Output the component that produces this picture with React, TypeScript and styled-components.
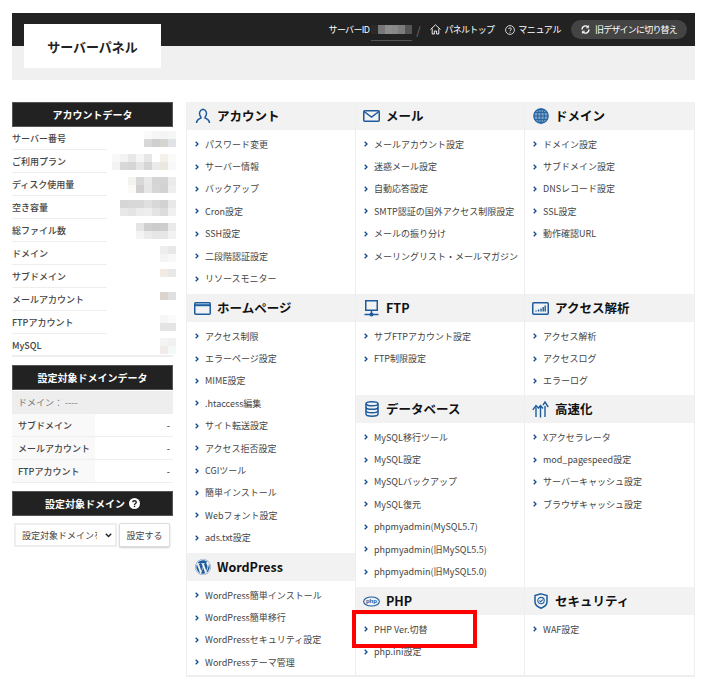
import styled, { createGlobalStyle } from "styled-components";
import { FaWordpress } from "react-icons/fa";

const GlobalStyle = createGlobalStyle`
    body {
        margin: 0;
        background: #fff;
        font-family: "Noto Sans CJK JP", "Noto Sans", sans-serif;
        color: #444;
    }
`;

const BLUE = "#1c5c9e";

const Page = styled.div`
    width: 683px;
    padding: 13px 15px 10px 12px;
`;

/* header */
const TopBar = styled.header`
    display: flex;
    align-items: flex-start;
    height: 33px;
    background: #222;
    color: #fff;
    font-size: 9px;
`;
const Logo = styled.div`
    position: relative;
    z-index: 1;
    flex: none;
    display: flex;
    align-items: center;
    justify-content: center;
    width: 137px;
    height: 44px;
    margin: 11px 0 0 12px;
    background: #fff;
    color: #222;
    font-size: 13px;
    font-weight: 700;
`;
const Nav = styled.nav`
    flex: 1;
    display: flex;
    align-items: center;
    justify-content: flex-end;
    height: 33px;
    padding-right: 8px;
`;
const NavText = styled.span<{ $gap?: number; $tight?: boolean }>`
    display: flex;
    align-items: center;
    gap: 3px;
    margin-right: ${(p) => p.$gap ?? 0}px;
    letter-spacing: ${(p) => (p.$tight ? "-0.7px" : "-0.4px")};
`;
const Slash = styled.span`
    margin: 0 10px 0 4px;
    color: #777;
    font-size: 11px;
`;
const IdBox = styled.span`
    display: flex;
    width: 41px;
    height: 9px;
    margin: 6px 0 0 2px;
    padding-bottom: 6px;
    border-bottom: 1px solid #555;
`;
const IdCell = styled.i<{ $c: string }>`
    flex: 1;
    height: 9px;
    background: ${(p) => p.$c};
`;
const SwitchPill = styled.span`
    display: flex;
    align-items: center;
    gap: 5px;
    height: 19px;
    padding: 0 10px;
    margin-left: 10px;
    border-radius: 10px;
    background: #444;
    letter-spacing: -0.8px;
`;
const Band = styled.div`
    height: 34px;
    background: #f0f0f0;
`;

/* layout */
const Body = styled.div`
    display: grid;
    grid-template-columns: 161px 509px;
    justify-content: space-between;
    margin-top: 22px;
`;

/* sidebar */
const Sidebar = styled.aside`
    display: flex;
    flex-direction: column;
`;
const SideTitle = styled.h2`
    display: flex;
    align-items: center;
    justify-content: center;
    gap: 4px;
    height: 25px;
    margin: 0;
    box-sizing: border-box;
    border: 1px solid #555;
    background: #222;
    color: #fff;
    font-size: 10px;
    font-weight: 700;
`;
const DataRow = styled.div`
    display: flex;
    align-items: center;
    justify-content: space-between;
    height: 23px;
    background: linear-gradient(#eee, #eee) no-repeat left bottom / 95px 1px;
    font-size: 9px;
    font-weight: 500;
    color: #444;
    &:last-child {
        background-size: 100% 2px;
    }
`;
const AccountData = styled.div`
    margin-bottom: 8px;
`;
const Mosaic = styled.div<{ $n: number }>`
    display: grid;
    grid-template-columns: repeat(${(p) => p.$n}, 8px);
    grid-auto-rows: 8px;
    margin-right: -3px;
`;
const Cell = styled.i<{ $c: string }>`
    background: ${(p) => p.$c};
`;
const DomainHead = styled.div`
    display: flex;
    align-items: center;
    height: 23px;
    margin-top: 1px;
    padding-left: 6px;
    background: #eee;
    color: #777;
    font-size: 9px;
`;
const TableRow = styled.div`
    display: flex;
    align-items: stretch;
    height: 23px;
    box-sizing: border-box;
    border-bottom: 1px solid #eee;
    font-size: 9px;
    font-weight: 500;
`;
const TableLabel = styled.div`
    display: flex;
    align-items: center;
    width: 77px;
    padding-left: 6px;
    background: #f9f9f9;
`;
const TableValue = styled.div`
    flex: 1;
    display: flex;
    align-items: center;
    justify-content: flex-end;
    padding-right: 3px;
`;
const DomainData = styled.div`
    margin-bottom: 8px;
`;
const FormRow = styled.form`
    display: flex;
    gap: 2px;
    margin: 7px 0 0 2px;
`;
const SelectWrap = styled.div`
    position: relative;
    width: 103px;
    height: 24px;
    svg {
        position: absolute;
        right: 5px;
        top: 10px;
        pointer-events: none;
    }
`;
const DomainSelect = styled.select`
    display: block;
    appearance: none;
    width: 100%;
    height: 100%;
    box-sizing: border-box;
    border: 2px solid #eee;
    border-radius: 0;
    background: #fff;
    color: #444;
    font-family: inherit;
    font-size: 9px;
    padding: 0 18px 0 6px;
`;
const SetButton = styled.button`
    width: 51px;
    height: 24px;
    padding: 0;
    box-sizing: border-box;
    border: 1px solid #ddd;
    border-radius: 2px;
    background: #fff;
    box-shadow: 0 1px 2px rgba(0, 0, 0, 0.2);
    color: #444;
    font-family: inherit;
    font-size: 9px;
`;

/* menu */
const Menu = styled.main`
    display: grid;
    grid-template-columns: repeat(3, 169px);
    height: 575px;
    box-sizing: border-box;
    border: 1px solid #eee;
    border-top: 0;
    border-bottom-width: 2px;
`;
const Column = styled.div`
    display: flex;
    flex-direction: column;
    &:not(:last-child) {
        border-right: 1px solid #eee;
    }
`;
const Section = styled.section<{ $h?: number }>`
    flex: ${(p) => (p.$h ? `0 0 ${p.$h}px` : "1")};
`;
const SectionHead = styled.h3`
    display: flex;
    align-items: center;
    gap: 6px;
    height: 28px;
    box-sizing: border-box;
    margin: 0;
    padding: 0 0 2px 7px;
    background: #f2f2f2;
    color: #111;
    font-size: 12.5px;
    font-weight: 700;
`;
const IconSlot = styled.span`
    display: flex;
    align-items: center;
    justify-content: center;
    width: 17px;
    height: 18px;
    margin-top: 2px;
    color: ${BLUE};
`;
const List = styled.ul`
    list-style: none;
    margin: 0;
    padding: 3px 0 0 8px;
`;
const Item = styled.li<{ $marked?: boolean }>`
    position: relative;
    display: flex;
    align-items: center;
    gap: 6px;
    height: 22.4px;
    font-size: 9px;
    color: #444;
    ${(p) =>
        p.$marked &&
        `&::after {
            content: "";
            position: absolute;
            left: -12px;
            top: -8px;
            width: 117px;
            height: 30px;
            border: 4px solid #f00;
        }`}
`;

function Chevron() {
    return (
        <svg width="4" height="6" viewBox="0 0 4 6">
            <path d="M0.7 0.7 L3 3 L0.7 5.3" fill="none" stroke="#0f4a8c" strokeWidth="1.3" />
        </svg>
    );
}

const stroke = { fill: "none", stroke: "currentColor", strokeWidth: 1.5 };

const icons: Record<string, React.ReactNode> = {
    user: (
        <svg width="16" height="16" viewBox="0 0 16 16" {...stroke}>
            <path d="M1.5 15 C1.5 11.5 4 11 6 10 C6.2 9 5.6 8.6 5 7.6 C4.2 6.2 4 2 8 1.2 C12 2 11.8 6.2 11 7.6 C10.4 8.6 9.8 9 10 10 C12 11 14.5 11.5 14.5 15" />
        </svg>
    ),
    mail: (
        <svg width="17" height="12" viewBox="0 0 17 12" {...stroke}>
            <rect x="0.75" y="0.75" width="15.5" height="10.5" rx="1" />
            <path d="M1 1.5 L8.5 7 L16 1.5" />
        </svg>
    ),
    globe: (
        <svg width="16" height="16" viewBox="0 0 16 16" fill="none" stroke="currentColor" strokeWidth="0.9">
            <circle cx="8" cy="8" r="7.2" fill="currentColor" fillOpacity="0.55" strokeWidth="1.2" />
            <ellipse cx="8" cy="8" rx="3.4" ry="7.2" />
            <path d="M8 1 V15 M1 8 H15 M2 4.4 H14 M2 11.6 H14" />
        </svg>
    ),
    window: (
        <svg width="17" height="13" viewBox="0 0 17 13" {...stroke}>
            <rect x="0.75" y="0.75" width="15.5" height="11.5" rx="1" />
            <path d="M1 3.2 H16" strokeWidth="2" />
        </svg>
    ),
    monitor: (
        <svg width="15" height="17" viewBox="0 0 15 17" {...stroke}>
            <rect x="1.75" y="0.75" width="11.5" height="9.5" />
            <path d="M7.5 10.5 V15 M0.5 14.5 H14.5" />
            <circle cx="7.5" cy="14.5" r="1.3" fill="currentColor" />
        </svg>
    ),
    chart: (
        <svg width="17" height="13" viewBox="0 0 17 13" {...stroke}>
            <rect x="0.75" y="0.75" width="15.5" height="11.5" rx="1" />
            <path d="M4 9.5 V8.5 M6.5 9.5 V7.5 M9 9.5 V6.5 M11.2 9.5 V5 M13.2 9.5 V3.5" strokeWidth="1.4" />
        </svg>
    ),
    database: (
        <svg width="14" height="16" viewBox="0 0 14 16" {...stroke}>
            <ellipse cx="7" cy="2.8" rx="6" ry="2" />
            <path d="M1 2.8 V13 C1 14.3 3.5 15.2 7 15.2 C10.5 15.2 13 14.3 13 13 V2.8" />
            <path d="M1 6.2 C1 7.5 3.5 8.3 7 8.3 C10.5 8.3 13 7.5 13 6.2 M1 9.8 C1 11 3.5 11.8 7 11.8 C10.5 11.8 13 11 13 9.8" />
        </svg>
    ),
    speed: (
        <svg width="17" height="17" viewBox="0 0 17 17" fill="none" stroke="currentColor" strokeWidth="1.4">
            <path d="M8.5 16.5 V5 M6 7.5 L8.5 4.5 L11 7.5" />
            <path d="M4 16 V6.5 M0.8 8.8 L4 4.5 L6 6.8" />
            <path d="M13 16 V5 M11 4.2 L13 1 L16.2 6" />
        </svg>
    ),
    wordpress: <FaWordpress size={16} />,
    php: (
        <svg width="18" height="11" viewBox="0 0 18 11">
            <ellipse cx="9" cy="5.5" rx="8.3" ry="4.8" fill="none" stroke="currentColor" strokeWidth="1.2" />
            <text x="9" y="7.6" textAnchor="middle" fontSize="6.5" fontWeight="700" fill="currentColor" fontFamily="Liberation Sans, sans-serif">
                php
            </text>
        </svg>
    ),
    shield: (
        <svg width="14" height="16" viewBox="0 0 14 16" {...stroke}>
            <path d="M7 0.9 L13 2.6 V9 C13 12 10 14 7 15.2 C4 14 1 12 1 9 V2.6 Z" />
            <circle cx="7" cy="7.6" r="3.2" strokeWidth="1.1" />
            <path d="M5.4 7.6 L6.7 8.8 L8.7 6.6" strokeWidth="1.1" />
        </svg>
    ),
};

type SectionData = { title: string; icon: string; h?: number; items: string[] };

const columns: SectionData[][] = [
    [
        { title: "アカウント", icon: "user", h: 192, items: ["パスワード変更", "サーバー情報", "バックアップ", "Cron設定", "SSH設定", "二段階認証設定", "リソースモニター"] },
        { title: "ホームページ", icon: "window", h: 259, items: ["アクセス制限", "エラーページ設定", "MIME設定", ".htaccess編集", "サイト転送設定", "アクセス拒否設定", "CGIツール", "簡単インストール", "Webフォント設定", "ads.txt設定"] },
        { title: "WordPress", icon: "wordpress", items: ["WordPress簡単インストール", "WordPress簡単移行", "WordPressセキュリティ設定", "WordPressテーマ管理"] },
    ],
    [
        { title: "メール", icon: "mail", h: 192, items: ["メールアカウント設定", "迷惑メール設定", "自動応答設定", "SMTP認証の国外アクセス制限設定", "メールの振り分け", "メーリングリスト・メールマガジン"] },
        { title: "FTP", icon: "monitor", h: 101, items: ["サブFTPアカウント設定", "FTP制限設定"] },
        { title: "データベース", icon: "database", h: 192, items: ["MySQL移行ツール", "MySQL設定", "MySQLバックアップ", "MySQL復元", "phpmyadmin(MySQL5.7)", "phpmyadmin(旧MySQL5.5)", "phpmyadmin(旧MySQL5.0)"] },
        { title: "PHP", icon: "php", items: ["PHP Ver.切替", "php.ini設定"] },
    ],
    [
        { title: "ドメイン", icon: "globe", h: 192, items: ["ドメイン設定", "サブドメイン設定", "DNSレコード設定", "SSL設定", "動作確認URL"] },
        { title: "アクセス解析", icon: "chart", h: 101, items: ["アクセス解析", "アクセスログ", "エラーログ"] },
        { title: "高速化", icon: "speed", h: 192, items: ["Xアクセラレータ", "mod_pagespeed設定", "サーバーキャッシュ設定", "ブラウザキャッシュ設定"] },
        { title: "セキュリティ", icon: "shield", items: ["WAF設定"] },
    ],
];

const accountRows: { label: string; cells: string[][] }[] = [
    { label: "サーバー番号", cells: [["#fafafa", "#f6f6f6", "#f4f4f4", "#f6f6f6"], ["#d8d8d8", "#cfcfcf", "#d4d4d0", "#e0e4e8"]] },
    { label: "ご利用プラン", cells: [["#f8f8f8", "#f3f3f3", "#e8e8e8", "#f5f5f5", "#e6e6e6", "#fff", "#f4f1ea", "#fafafa"], ["#f3f3f3", "#d8d8d8", "#d6d6d6", "#e5e5e5", "#d5d5d5", "#ebebeb", "#ece8e0", "#f8f8f8"]] },
    { label: "ディスク使用量", cells: [["#f5f3f0", "#d8d8d8", "#e8e8e8", "#d4d4d4", "#d4d4d4", "#ebebeb"], ["#fbfaf8", "#cfcfcf", "#e6e6e6", "#d6d6d6", "#d2d2d2", "#eeeeee"]] },
    { label: "空き容量", cells: [["#d6d6d6", "#d8d8d8", "#d8d8d8", "#e0e0e0", "#d8d8d8", "#d2d2d2", "#e8e8e8"], ["#e8e8e8", "#e4e4e4", "#ececec", "#eeeeee", "#e4e4e4", "#dcdcdc", "#f0f0f0"]] },
    { label: "総ファイル数", cells: [["#e4e4e4", "#cfcfcf", "#cbcbcb", "#cdcdcd", "#eaeaea"], ["#f4f4f4", "#ebebeb", "#e6e6e6", "#e6e6e6", "#f2f2f2"]] },
    { label: "ドメイン", cells: [["#eeeeee", "#e8e8e8"], ["#f4f4f4", "#f8f8f8"]] },
    { label: "サブドメイン", cells: [["#f1ebe4", "#e8e8e8"], ["#fff", "#fff"]] },
    { label: "メールアカウント", cells: [["#dad4cc", "#e0e0e0"], ["#fff", "#fff"]] },
    { label: "FTPアカウント", cells: [["#f6f6f6", "#fafafa"], ["#e4e4e4", "#e4e4e4"]] },
    { label: "MySQL", cells: [["#f4f4f4", "#f1f1f1"], ["#f0ebe6", "#f4f8f6"]] },
];

const idCells = ["#2a2a2a", "#777", "#8c8c8c", "#888", "#7c7c7c", "#555"];

export default function App() {
    return (
        <Page>
            <GlobalStyle />
            <TopBar>
                <Logo>サーバーパネル</Logo>
                <Nav>
                    <NavText $tight>サーバーID</NavText>
                    <IdBox>
                        {idCells.map((c, i) => (
                            <IdCell key={i} $c={c} />
                        ))}
                    </IdBox>
                    <Slash>/</Slash>
                    <NavText $gap={11} $tight>
                        <svg width="11" height="11" viewBox="0 0 11 11" fill="none" stroke="#fff" strokeWidth="0.9">
                            <path d="M0.5 5.5 L5.5 0.8 L10.5 5.5 M2.2 4.5 V10 H4.4 V7 H6.6 V10 H8.8 V4.5" />
                        </svg>
                        パネルトップ
                    </NavText>
                    <NavText>
                        <svg width="10" height="10" viewBox="0 0 10 10" fill="none" stroke="#fff" strokeWidth="0.8">
                            <circle cx="5" cy="5" r="4.4" />
                            <path d="M3.6 4 C3.6 2.4 6.4 2.4 6.4 4 C6.4 5 5 5 5 6.2 M5 7 V7.8" />
                        </svg>
                        マニュアル
                    </NavText>
                    <SwitchPill>
                        <svg width="9" height="9" viewBox="0 0 9 9" fill="none" stroke="#fff" strokeWidth="1.4">
                            <path d="M1 4.5 A3.5 3.5 0 0 1 7 2 M8 4.5 A3.5 3.5 0 0 1 2 7" />
                            <path d="M7.6 0.4 V2.8 H5.2 M1.4 8.6 V6.2 H3.8" strokeWidth="0.9" />
                        </svg>
                        旧デザインに切り替え
                    </SwitchPill>
                </Nav>
            </TopBar>
            <Band />
            <Body>
                <Sidebar>
                    <SideTitle>アカウントデータ</SideTitle>
                    <AccountData>
                        {accountRows.map((row) => (
                            <DataRow key={row.label}>
                                {row.label}
                                <Mosaic $n={row.cells[0].length}>
                                    {row.cells.flat().map((c, i) => (
                                        <Cell key={i} $c={c} />
                                    ))}
                                </Mosaic>
                            </DataRow>
                        ))}
                    </AccountData>
                    <SideTitle>設定対象ドメインデータ</SideTitle>
                    <DomainData>
                        <DomainHead>ドメイン： ----</DomainHead>
                        {["サブドメイン", "メールアカウント", "FTPアカウント"].map((label) => (
                            <TableRow key={label}>
                                <TableLabel>{label}</TableLabel>
                                <TableValue>-</TableValue>
                            </TableRow>
                        ))}
                    </DomainData>
                    <SideTitle>
                        設定対象ドメイン
                        <svg width="11" height="11" viewBox="0 0 11 11">
                            <circle cx="5.5" cy="5.5" r="5.5" fill="#fff" />
                            <path d="M3.7 4.3 C3.7 2.2 7.3 2.2 7.3 4.3 C7.3 5.5 5.5 5.5 5.5 6.9" fill="none" stroke="#222" strokeWidth="1.3" />
                            <rect x="4.8" y="7.7" width="1.4" height="1.4" fill="#222" />
                        </svg>
                    </SideTitle>
                    <FormRow>
                        <SelectWrap>
                            <DomainSelect>
                                <option>設定対象ドメインを選択</option>
                            </DomainSelect>
                            <svg width="7" height="5" viewBox="0 0 7 5">
                                <path d="M0.8 0.8 L3.5 3.6 L6.2 0.8" fill="none" stroke="#222" strokeWidth="1.4" />
                            </svg>
                        </SelectWrap>
                        <SetButton type="button">設定する</SetButton>
                    </FormRow>
                </Sidebar>
                <Menu>
                    {columns.map((sections, i) => (
                        <Column key={i}>
                            {sections.map((s) => (
                                <Section key={s.title} $h={s.h}>
                                    <SectionHead>
                                        <IconSlot>{icons[s.icon]}</IconSlot>
                                        {s.title}
                                    </SectionHead>
                                    <List>
                                        {s.items.map((item) => (
                                            <Item key={item} $marked={item === "PHP Ver.切替"}>
                                                <Chevron />
                                                {item}
                                            </Item>
                                        ))}
                                    </List>
                                </Section>
                            ))}
                        </Column>
                    ))}
                </Menu>
            </Body>
        </Page>
    );
}
